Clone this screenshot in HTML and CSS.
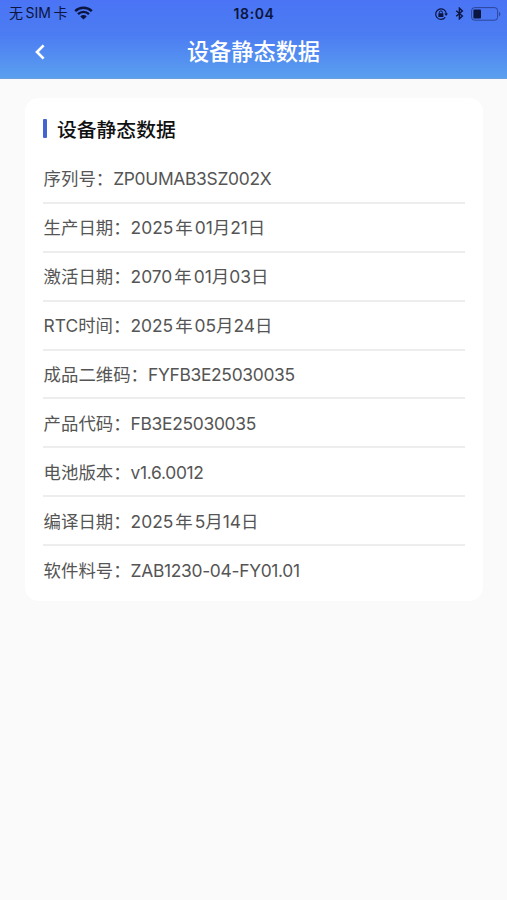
FILE: index.html
```html
<!DOCTYPE html>
<html lang="zh-CN">
  <head>
    <meta charset="utf-8">
    <meta name="viewport" content="width=device-width, initial-scale=1">
    <title>设备静态数据</title>
    <link rel="stylesheet" href="styles.css">
  </head>
  <body>
    <header>
      <div class="status">
        <div class="carrier">
          <span>无<span class="sim">SIM</span>卡</span>
          <svg class="wifi" width="19" height="14" viewBox="0 0 19 14">
            <path d="M1.2 5.2a11.8 11.8 0 0 1 16.6 0M4 8.1a7.8 7.8 0 0 1 11 0" fill="none" stroke="currentColor" stroke-width="2.4"/>
            <path d="M9.5 13.6 6.3 10.4a4.5 4.5 0 0 1 6.4 0z" fill="currentColor"/>
          </svg>
        </div>
        <time>18:04</time>
        <div class="indicators">
          <svg class="lock" width="14" height="14" viewBox="0 0 14 14">
            <path d="M11.2 10.4A5.3 5.3 0 1 1 12.3 7" fill="none" stroke="currentColor" stroke-width="1.2"/>
            <path d="M10.3 6.6h3.6l-1.8 2.5z" fill="currentColor"/>
            <rect x="4.4" y="6.3" width="5" height="3.7" rx=".5" fill="currentColor"/>
            <path d="M5.4 6.6V5.4a1.5 1.5 0 0 1 3 0v1.2" fill="none" stroke="currentColor"/>
          </svg>
          <svg class="bluetooth" width="9" height="13" viewBox="0 0 9 13">
            <path d="M1.2 3.7 7.4 9 4.4 11.8V1.2L7.4 4 1.2 9.3" fill="none" stroke="currentColor" stroke-width="1.4"/>
          </svg>
          <svg class="battery" width="30" height="14" viewBox="0 0 30 14">
            <rect x=".6" y=".6" width="26" height="12.6" rx="3" fill="none" stroke="currentColor" stroke-opacity=".5"/>
            <rect x="2.4" y="2.4" width="7.6" height="9" rx="1" fill="currentColor"/>
            <path d="M28 4.7c1.8.8 1.8 3.8 0 4.6z" fill="currentColor" fill-opacity=".5"/>
          </svg>
        </div>
      </div>
      <nav>
        <svg class="back" width="12" height="16" viewBox="0 0 12 16">
          <path d="M9.6 1.4 3 8l6.6 6.6" fill="none" stroke="currentColor" stroke-width="2.7"/>
        </svg>
        <h1>设备静态数据</h1>
      </nav>
    </header>

    <main>
      <h2>设备静态数据</h2>
      <dl>
        <div class="row"><dt>序列号：</dt><dd class="code">ZP0UMAB3SZ002X</dd></div>
        <div class="row"><dt>生产日期：</dt><dd>2025<i>年</i>01月21日</dd></div>
        <div class="row"><dt>激活日期：</dt><dd>2070<i>年</i>01月03日</dd></div>
        <div class="row"><dt>RTC时间：</dt><dd>2025<i>年</i>05月24日</dd></div>
        <div class="row"><dt>成品二维码：</dt><dd class="code">FYFB3E25030035</dd></div>
        <div class="row"><dt>产品代码：</dt><dd class="code">FB3E25030035</dd></div>
        <div class="row"><dt>电池版本：</dt><dd class="code">v1.6.0012</dd></div>
        <div class="row"><dt>编译日期：</dt><dd>2025<i>年</i>5月14日</dd></div>
        <div class="row"><dt>软件料号：</dt><dd class="code">ZAB1230-04-FY01.01</dd></div>
      </dl>
    </main>
  </body>
</html>
```

FILE: styles.css
```css
:root {
  --page: #fafafa;
  --ink: #0b1540;
  --text: #555;
  --line: #ededed;
  --accent: #4265cf;
}

* {
  box-sizing: border-box;
}

body {
  margin: 0;
  min-height: 100vh;
  background: var(--page);
  color: var(--text);
  font-family: Inter, "Noto Sans CJK SC", sans-serif;
}

header {
  height: 79px;
  background: linear-gradient(#4a74f5, #4c7cf2 45%, #5a9fef);
  border-bottom: 1px solid #6d9fdf;
}

.status {
  display: grid;
  grid-template-columns: 1fr auto 1fr;
  align-items: center;
  height: 27px;
  padding: 0 6px 0 9px;
  color: var(--ink);
  font-size: 14px;
}
  .carrier {
    display: flex;
    align-items: center;
    gap: 7px;
    height: 26px;
    align-self: start;
    line-height: 26px;
  }
  .sim {
    margin: 0 2.5px;
  }
  .status time {
    margin-right: 2px;
    font-weight: 600;
    letter-spacing: 0.6px;
  }
  .indicators {
    display: flex;
    align-items: center;
    justify-content: flex-end;
    gap: 7px;
  }

nav {
  display: grid;
  grid-template-columns: 46px 1fr 46px;
  align-items: center;
  height: 50px;
  color: #fff;
}
  .back {
    justify-self: end;
  }
  h1 {
    margin: 0;
    font-size: 22.2px;
    font-weight: 500;
    line-height: 50px;
    text-align: center;
  }

main {
  width: 458px;
  height: 503px;
  margin: 19px 0 0 25px;
  padding: 18px 18px 0;
  background: #fff;
  border-radius: 14px;
}

h2 {
  display: flex;
  align-items: center;
  gap: 10px;
  margin: 0;
  height: 24px;
  color: #111;
  font-size: 19.8px;
  font-weight: 500;
}
  h2::before {
    content: "";
    width: 4px;
    height: 19px;
    background: var(--accent);
    border-radius: 1px;
  }

dl {
  margin: 15px 0 0;
}

.row {
  display: flex;
  align-items: center;
  height: 48.9px;
  padding: 2px 0 0 0.6px;
  border-bottom: 2px solid var(--line);
  font-size: 17.4px;
}
  .row:last-child {
    padding-top: 0;
    border-bottom: none;
  }
  dt, dd {
    margin: 0;
    line-height: 26px;
    white-space: nowrap;
  }
  dd i {
    margin: 0 2px;
    font-style: normal;
  }
  .code {
    letter-spacing: -0.3px;
  }
```
